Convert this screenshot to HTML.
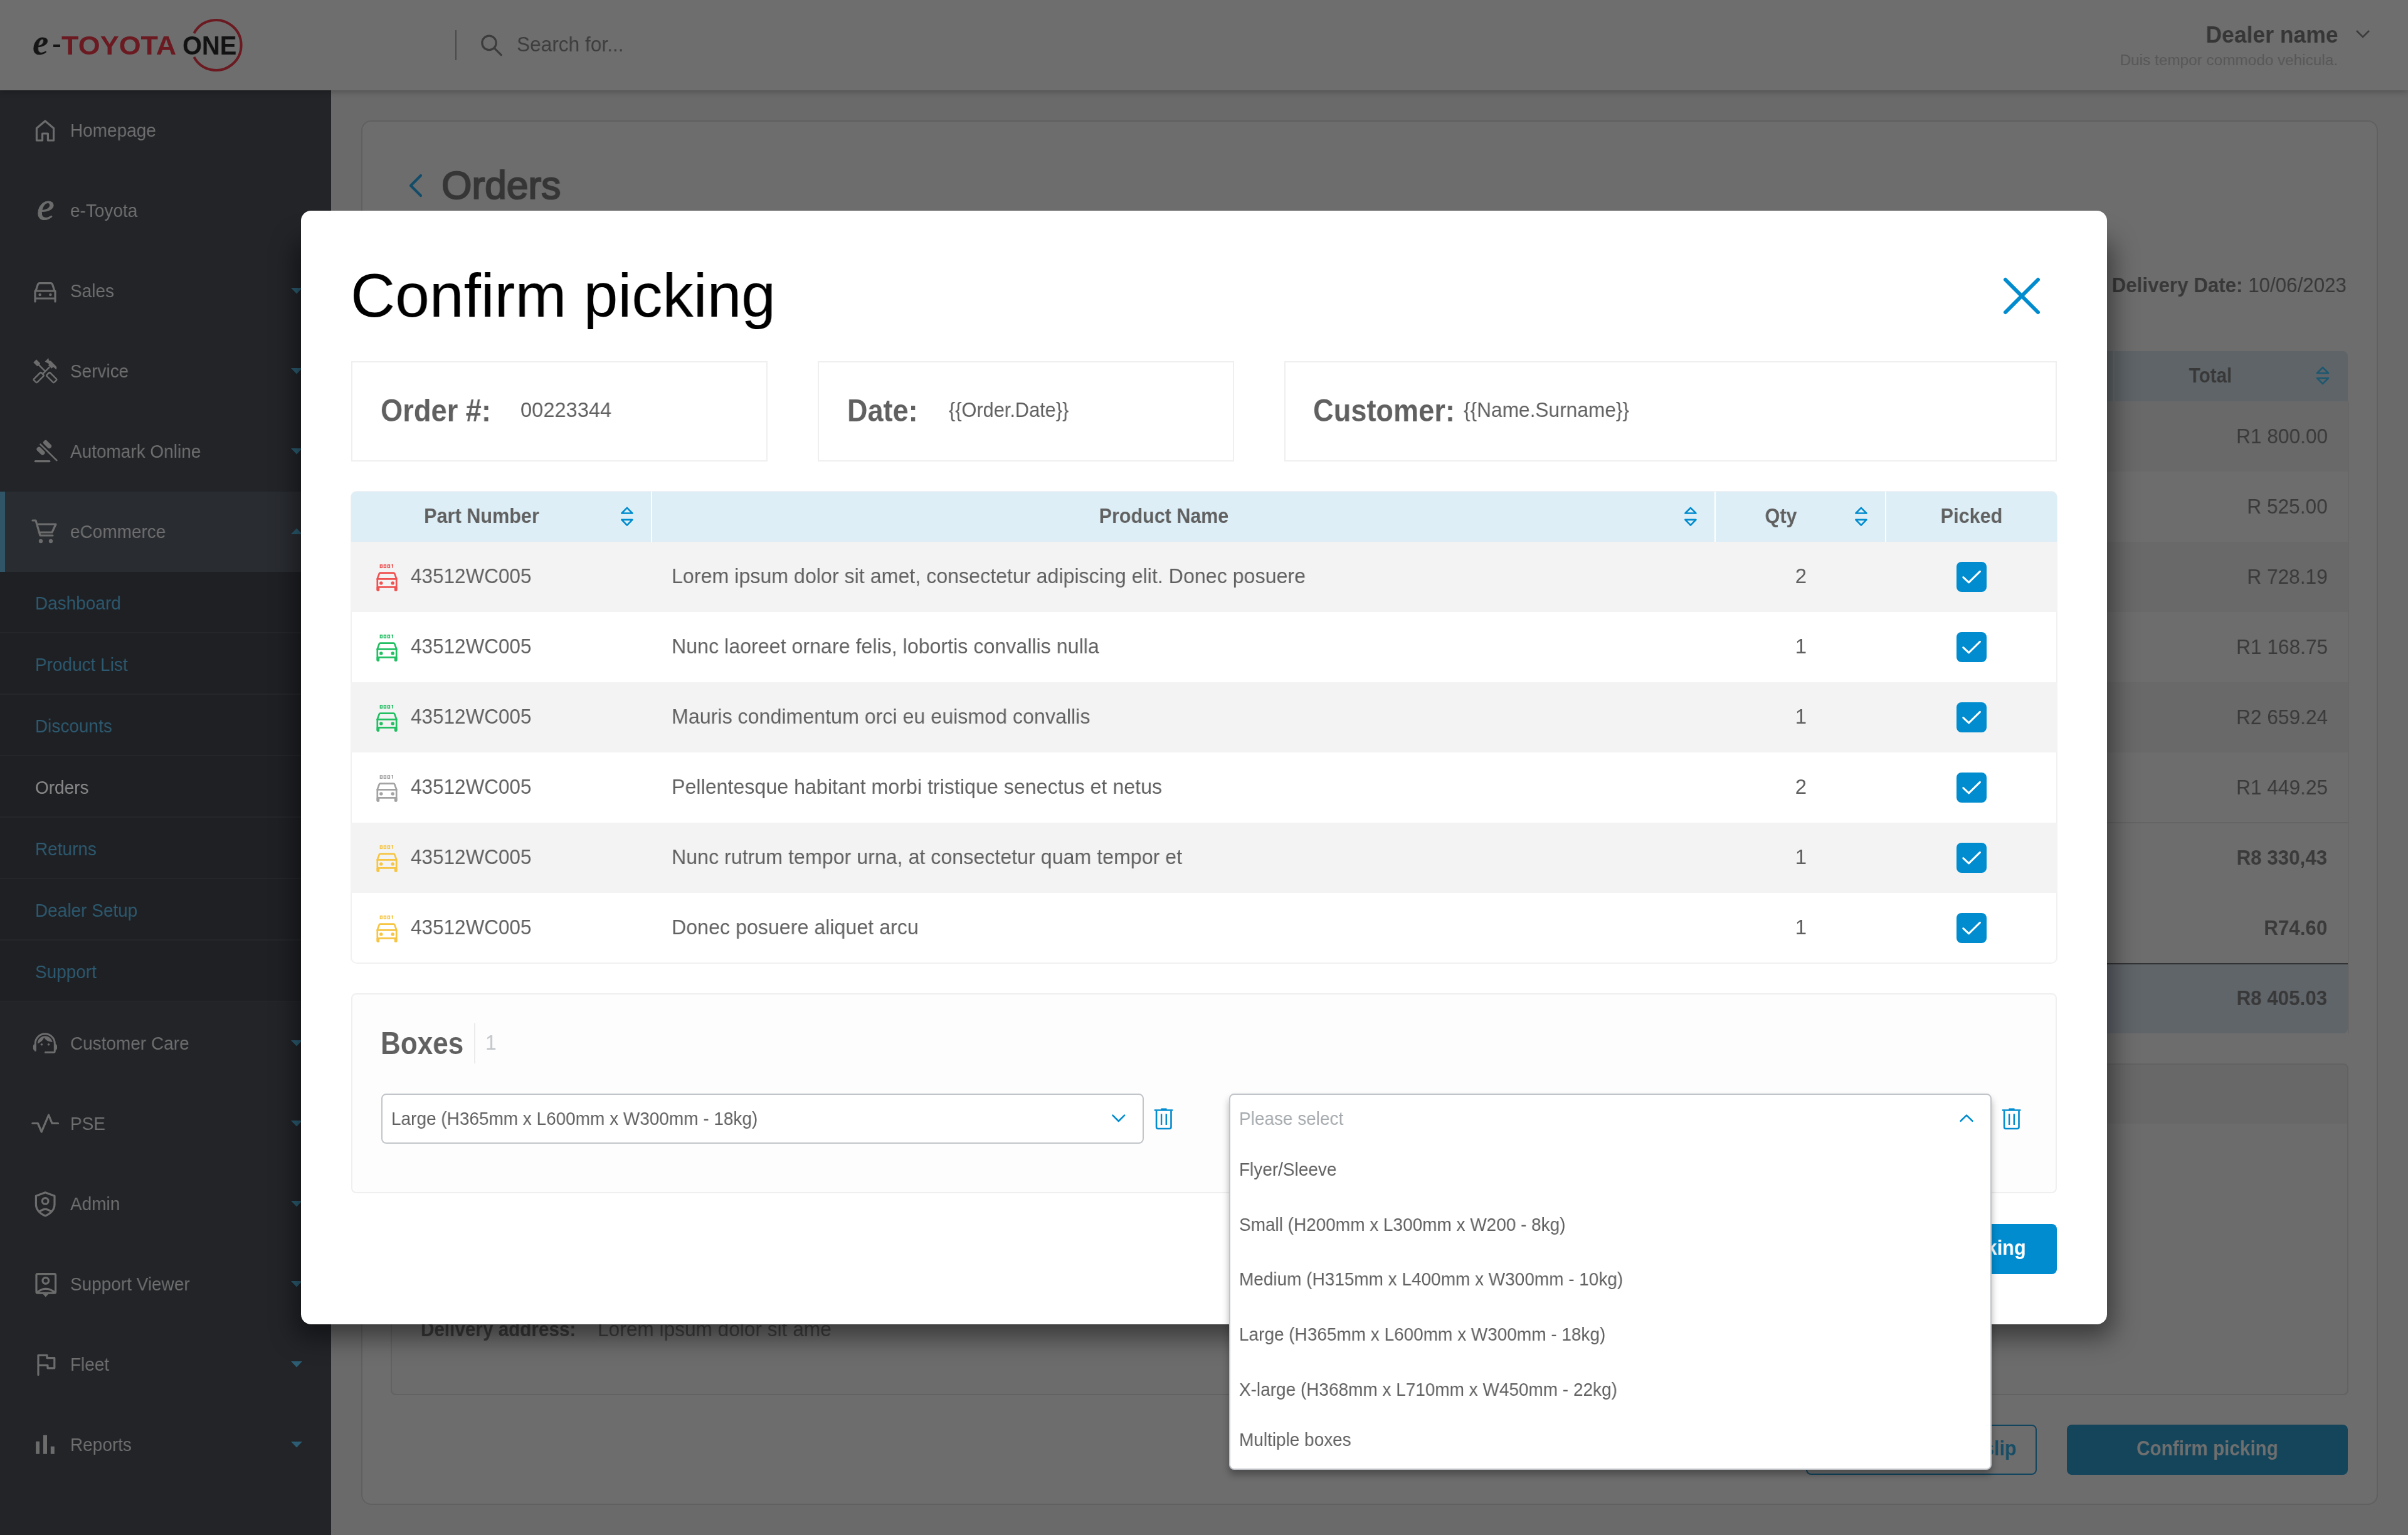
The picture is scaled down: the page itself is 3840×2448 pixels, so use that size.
<!DOCTYPE html>
<html><head><meta charset="utf-8">
<style>
html,body{margin:0;padding:0;}
html{zoom:2;}
@media (max-width:2600px){html{zoom:1;}}
body{width:1920px;height:1224px;overflow:hidden;position:relative;background:#6a6a6a;font-family:"Liberation Sans",sans-serif;}
.a{position:absolute;}
.t{position:absolute;white-space:nowrap;line-height:1;will-change:transform;}
svg{overflow:visible;}
</style></head><body>
<div class="a" style="left:288px;top:96px;width:1608px;height:1104px;background:#6d6d6d;border:1px solid #606060;border-radius:8px;box-sizing:border-box;"></div>
<svg class="a" style="left:319px;top:136px;" width="24" height="24" viewBox="0 0 24 24"><path d="M16.5,4 L8.5,12 L16.5,20" fill="none" stroke="#124c68" stroke-width="2.1" stroke-linecap="round" stroke-linejoin="round"/></svg>
<div class="t" style="top:132.01px;font-size:31.93px;color:#363636;font-weight:400;left:352.22px;transform-origin:0 0;transform:scaleX(0.975);-webkit-text-stroke:1.1px #363636;">Orders</div>
<div class="t" style="right:49px;top:219.29px;font-size:16.48px;color:#383838;transform-origin:100% 0;transform:scaleX(0.95)"><b>Delivery Date:</b> 10/06/2023</div>
<div class="a" style="left:1500px;top:280px;width:372px;height:40px;background:#5e6468;border-radius:0 4px 0 0;"></div>
<div class="a" style="left:1685px;top:280px;width:1px;height:40px;background:#666b6e;"></div>
<div class="t" style="top:291.34px;font-size:16.48px;color:#383838;font-weight:700;left:1762.50px;transform-origin:0 0;transform:scaleX(0.9) translateX(-50%);">Total</div>
<svg class="a" style="left:1846px;top:291px;" width="12" height="17" viewBox="0 0 12 17"><path d="M1.5,6.5 L6,2 L10.5,6.5 Z M1.5,10.5 L6,15 L10.5,10.5 Z" fill="none" stroke="#1d5870" stroke-width="1.3" stroke-linejoin="round"/></svg>
<div class="a" style="left:1500px;top:320px;width:372px;height:56px;background:#696969;"></div>
<div class="t" style="top:339.84px;font-size:16.48px;color:#3a3a3a;font-weight:400;right:64.21px;transform-origin:100% 0;transform:scaleX(0.96);">R1 800.00</div>
<div class="t" style="top:395.84px;font-size:16.48px;color:#3a3a3a;font-weight:400;right:64.21px;transform-origin:100% 0;transform:scaleX(0.96);">R 525.00</div>
<div class="a" style="left:1500px;top:432px;width:372px;height:56px;background:#696969;"></div>
<div class="t" style="top:451.84px;font-size:16.48px;color:#3a3a3a;font-weight:400;right:64.21px;transform-origin:100% 0;transform:scaleX(0.96);">R 728.19</div>
<div class="t" style="top:507.84px;font-size:16.48px;color:#3a3a3a;font-weight:400;right:64.21px;transform-origin:100% 0;transform:scaleX(0.96);">R1 168.75</div>
<div class="a" style="left:1500px;top:544px;width:372px;height:56px;background:#696969;"></div>
<div class="t" style="top:563.84px;font-size:16.48px;color:#3a3a3a;font-weight:400;right:64.21px;transform-origin:100% 0;transform:scaleX(0.96);">R2 659.24</div>
<div class="t" style="top:619.84px;font-size:16.48px;color:#3a3a3a;font-weight:400;right:64.21px;transform-origin:100% 0;transform:scaleX(0.96);">R1 449.25</div>
<div class="t" style="top:675.84px;font-size:16.48px;color:#3a3a3a;font-weight:700;right:64.22px;transform-origin:100% 0;transform:scaleX(0.95);">R8 330,43</div>
<div class="t" style="top:731.84px;font-size:16.48px;color:#3a3a3a;font-weight:700;right:64.22px;transform-origin:100% 0;transform:scaleX(0.95);">R74.60</div>
<div class="a" style="left:1500px;top:655.5px;width:373px;height:1.0px;background:#646464;"></div>
<div class="a" style="left:1500px;top:768px;width:372px;height:56px;background:#60656a;border-top:1px solid #333;box-sizing:border-box;border-radius:0 0 4px 4px;"></div>
<div class="t" style="top:787.84px;font-size:16.48px;color:#383838;font-weight:700;right:64.22px;transform-origin:100% 0;transform:scaleX(0.95);">R8 405.03</div>
<div class="a" style="left:1872px;top:320px;width:1px;height:504px;background:#676767;"></div>
<div class="a" style="left:311.5px;top:848px;width:1561.0px;height:264.5px;border:1px solid #626262;border-radius:4px;box-sizing:border-box;background:#6c6c6c;"></div>
<div class="a" style="left:312.5px;top:849px;width:1559.0px;height:47px;background:#686868;border-radius:4px 4px 0 0;"></div>
<div class="t" style="top:1051.84px;font-size:16.48px;color:#383838;font-weight:700;left:335.36px;transform-origin:0 0;transform:scaleX(0.9);">Delivery address:</div>
<div class="t" style="top:1051.84px;font-size:16.48px;color:#3d3d3d;font-weight:400;left:476.69px;transform-origin:0 0;transform:scaleX(0.96);">Lorem ipsum dolor sit ame</div>
<div class="a" style="left:1440px;top:1136px;width:184px;height:40px;border:1px solid #11455e;border-radius:4px;box-sizing:border-box;"></div>
<div class="t" style="top:1146.84px;font-size:16.48px;color:#174d66;font-weight:700;right:312.03px;transform-origin:100% 0;transform:scaleX(0.93);">Print packing slip</div>
<div class="a" style="left:1648px;top:1136px;width:224px;height:40px;background:#14455b;border-radius:4px;"></div>
<div class="t" style="top:1146.84px;font-size:16.48px;color:#6f6f6f;font-weight:700;left:1760.00px;transform-origin:0 0;transform:scaleX(0.9) translateX(-50%);">Confirm picking</div>
<div class="a" style="left:0;top:0;width:1920px;height:72px;background:#6e6e6e;box-shadow:0 1px 5px rgba(0,0,0,.25);z-index:3;">
</div>
<div class="t" style="top:19.16px;font-size:29.87px;color:#151515;font-weight:700;font-family:'Liberation Serif';left:25.91px;transform-origin:0 0;transform:scaleX(0.95);z-index:4;font-style:italic;">e</div>
<div class="a" style="left:42.5px;top:35.5px;width:5.5px;height:2.0px;background:#151515;z-index:4;"></div>
<div class="t" style="top:25.64px;font-size:21.42px;color:#6a1a20;font-weight:700;left:49.13px;transform-origin:0 0;transform:scaleX(1.05);z-index:4;">TOYOTA</div>
<div class="t" style="top:25.64px;font-size:21.42px;color:#121212;font-weight:700;left:145.51px;transform-origin:0 0;transform:scaleX(0.93);z-index:4;">ONE</div>
<svg class="a" style="left:150.5px;top:15px;z-index:4;" width="42" height="42" viewBox="0 0 42 42"><path d="M4.2,11.5 A20,20 0 1 1 4.2,30.5" fill="none" stroke="#6a1a20" stroke-width="2"/></svg>
<div class="a" style="left:363px;top:24px;width:1px;height:24px;background:#4a4a4a;z-index:4;"></div>
<svg class="a" style="left:380px;top:24px;z-index:4;" width="24" height="24" viewBox="0 0 24 24"><circle cx="10" cy="10.2" r="5.6" fill="none" stroke="#3c3c3c" stroke-width="1.6"/><path d="M14.2,14.4 L19.6,19.8" stroke="#3c3c3c" stroke-width="1.6" stroke-linecap="round"/></svg>
<div class="t" style="top:27.34px;font-size:16.48px;color:#3d3d3d;font-weight:400;left:411.79px;transform-origin:0 0;transform:scaleX(0.96);z-index:4;">Search for...</div>
<div class="t" style="top:18.59px;font-size:18.54px;color:#363636;font-weight:700;right:55.61px;transform-origin:100% 0;transform:scaleX(0.957);z-index:4;">Dealer name</div>
<svg class="a" style="left:1878px;top:23px;z-index:4;" width="12" height="8" viewBox="0 0 12 8"><path d="M1,1.5 L6,6.5 L11,1.5" fill="none" stroke="#3b3b3b" stroke-width="1.3"/></svg>
<div class="t" style="top:41.84px;font-size:12.36px;color:#575757;font-weight:400;right:55.89px;transform-origin:100% 0;transform:scaleX(0.984);z-index:4;">Duis tempor commodo vehicula.</div>
<div class="a" style="left:0;top:72px;width:264px;height:1152px;background:#222428;z-index:2;"></div>
<div class="t" style="top:97.09px;font-size:14.42px;color:#6f6f6f;font-weight:400;left:55.92px;transform-origin:0 0;transform:scaleX(0.97);z-index:2;">Homepage</div>
<div class="t" style="top:161.09px;font-size:14.42px;color:#6f6f6f;font-weight:400;left:55.92px;transform-origin:0 0;transform:scaleX(0.97);z-index:2;">e-Toyota</div>
<div class="t" style="top:225.09px;font-size:14.42px;color:#6f6f6f;font-weight:400;left:55.92px;transform-origin:0 0;transform:scaleX(0.97);z-index:2;">Sales</div>
<svg class="a" style="left:232px;top:229.5px;z-index:2;" width="9" height="5" viewBox="0 0 9 5"><path d="M0,0 L4.5,4.7 L9,0 Z" fill="#2c5d73"/></svg>
<div class="t" style="top:289.09px;font-size:14.42px;color:#6f6f6f;font-weight:400;left:55.92px;transform-origin:0 0;transform:scaleX(0.97);z-index:2;">Service</div>
<svg class="a" style="left:232px;top:293.5px;z-index:2;" width="9" height="5" viewBox="0 0 9 5"><path d="M0,0 L4.5,4.7 L9,0 Z" fill="#2c5d73"/></svg>
<div class="t" style="top:353.09px;font-size:14.42px;color:#6f6f6f;font-weight:400;left:55.92px;transform-origin:0 0;transform:scaleX(0.97);z-index:2;">Automark Online</div>
<svg class="a" style="left:232px;top:357.5px;z-index:2;" width="9" height="5" viewBox="0 0 9 5"><path d="M0,0 L4.5,4.7 L9,0 Z" fill="#2c5d73"/></svg>
<div class="a" style="left:0px;top:392px;width:264px;height:64px;background:#292c31;z-index:2;"></div>
<div class="a" style="left:0px;top:392px;width:4px;height:64px;background:#2f5567;z-index:2;"></div>
<div class="t" style="top:417.09px;font-size:14.42px;color:#6f6f6f;font-weight:400;left:55.92px;transform-origin:0 0;transform:scaleX(0.97);z-index:2;">eCommerce</div>
<svg class="a" style="left:232px;top:421px;z-index:2;" width="9" height="5" viewBox="0 0 9 5"><path d="M0,5 L4.5,0.3 L9,5 Z" fill="#2c5d73"/></svg>
<div class="a" style="left:0px;top:456px;width:264px;height:49px;background:#1f2024;border-bottom:1px solid #242629;box-sizing:border-box;z-index:2;"></div>
<div class="t" style="top:474.09px;font-size:14.42px;color:#2d5a70;font-weight:400;left:27.92px;transform-origin:0 0;transform:scaleX(0.97);z-index:2;">Dashboard</div>
<div class="a" style="left:0px;top:505px;width:264px;height:49px;background:#1f2024;border-bottom:1px solid #242629;box-sizing:border-box;z-index:2;"></div>
<div class="t" style="top:523.09px;font-size:14.42px;color:#2d5a70;font-weight:400;left:27.92px;transform-origin:0 0;transform:scaleX(0.97);z-index:2;">Product List</div>
<div class="a" style="left:0px;top:554px;width:264px;height:49px;background:#1f2024;border-bottom:1px solid #242629;box-sizing:border-box;z-index:2;"></div>
<div class="t" style="top:572.09px;font-size:14.42px;color:#2d5a70;font-weight:400;left:27.92px;transform-origin:0 0;transform:scaleX(0.97);z-index:2;">Discounts</div>
<div class="a" style="left:0px;top:603px;width:264px;height:49px;background:#1f2024;border-bottom:1px solid #242629;box-sizing:border-box;z-index:2;"></div>
<div class="t" style="top:621.09px;font-size:14.42px;color:#8a8a8a;font-weight:400;left:27.92px;transform-origin:0 0;transform:scaleX(0.97);z-index:2;">Orders</div>
<div class="a" style="left:0px;top:652px;width:264px;height:49px;background:#1f2024;border-bottom:1px solid #242629;box-sizing:border-box;z-index:2;"></div>
<div class="t" style="top:670.09px;font-size:14.42px;color:#2d5a70;font-weight:400;left:27.92px;transform-origin:0 0;transform:scaleX(0.97);z-index:2;">Returns</div>
<div class="a" style="left:0px;top:701px;width:264px;height:49px;background:#1f2024;border-bottom:1px solid #242629;box-sizing:border-box;z-index:2;"></div>
<div class="t" style="top:719.09px;font-size:14.42px;color:#2d5a70;font-weight:400;left:27.92px;transform-origin:0 0;transform:scaleX(0.97);z-index:2;">Dealer Setup</div>
<div class="a" style="left:0px;top:750px;width:264px;height:49px;background:#1f2024;border-bottom:1px solid #242629;box-sizing:border-box;z-index:2;"></div>
<div class="t" style="top:768.09px;font-size:14.42px;color:#2d5a70;font-weight:400;left:27.92px;transform-origin:0 0;transform:scaleX(0.97);z-index:2;">Support</div>
<div class="t" style="top:825.09px;font-size:14.42px;color:#6f6f6f;font-weight:400;left:55.92px;transform-origin:0 0;transform:scaleX(0.97);z-index:2;">Customer Care</div>
<svg class="a" style="left:232px;top:829.5px;z-index:2;" width="9" height="5" viewBox="0 0 9 5"><path d="M0,0 L4.5,4.7 L9,0 Z" fill="#2c5d73"/></svg>
<div class="t" style="top:889.09px;font-size:14.42px;color:#6f6f6f;font-weight:400;left:55.92px;transform-origin:0 0;transform:scaleX(0.97);z-index:2;">PSE</div>
<svg class="a" style="left:232px;top:893.5px;z-index:2;" width="9" height="5" viewBox="0 0 9 5"><path d="M0,0 L4.5,4.7 L9,0 Z" fill="#2c5d73"/></svg>
<div class="t" style="top:953.09px;font-size:14.42px;color:#6f6f6f;font-weight:400;left:55.92px;transform-origin:0 0;transform:scaleX(0.97);z-index:2;">Admin</div>
<svg class="a" style="left:232px;top:957.5px;z-index:2;" width="9" height="5" viewBox="0 0 9 5"><path d="M0,0 L4.5,4.7 L9,0 Z" fill="#2c5d73"/></svg>
<div class="t" style="top:1017.09px;font-size:14.42px;color:#6f6f6f;font-weight:400;left:55.92px;transform-origin:0 0;transform:scaleX(0.97);z-index:2;">Support Viewer</div>
<svg class="a" style="left:232px;top:1021.5px;z-index:2;" width="9" height="5" viewBox="0 0 9 5"><path d="M0,0 L4.5,4.7 L9,0 Z" fill="#2c5d73"/></svg>
<div class="t" style="top:1081.09px;font-size:14.42px;color:#6f6f6f;font-weight:400;left:55.92px;transform-origin:0 0;transform:scaleX(0.97);z-index:2;">Fleet</div>
<svg class="a" style="left:232px;top:1085.5px;z-index:2;" width="9" height="5" viewBox="0 0 9 5"><path d="M0,0 L4.5,4.7 L9,0 Z" fill="#2c5d73"/></svg>
<div class="t" style="top:1145.09px;font-size:14.42px;color:#6f6f6f;font-weight:400;left:55.92px;transform-origin:0 0;transform:scaleX(0.97);z-index:2;">Reports</div>
<svg class="a" style="left:232px;top:1149.5px;z-index:2;" width="9" height="5" viewBox="0 0 9 5"><path d="M0,0 L4.5,4.7 L9,0 Z" fill="#2c5d73"/></svg>
<svg class="a" style="left:24px;top:92px;z-index:2;" width="24" height="24" viewBox="0 0 24 24"><path d="M5.2,20 V10.2 L12,4.5 L18.8,10.2 V20 H14.2 V14.5 H9.8 V20 Z" fill="none" stroke="#6c6c6c" stroke-width="1.6" stroke-linecap="round" stroke-linejoin="round"/></svg>
<div class="t" style="top:149.59px;font-size:30.90px;color:#6c6c6c;font-weight:400;font-family:'Liberation Serif';left:29.44px;transform-origin:0 0;z-index:2;font-style:italic;-webkit-text-stroke:0.6px #6c6c6c;">e</div>
<svg class="a" style="left:24px;top:220px;z-index:2;" width="24" height="24" viewBox="0 0 24 24"><path d="M4.5,12 L6.2,6.8 Q6.6,5.8 7.6,5.8 H16.4 Q17.4,5.8 17.8,6.8 L19.5,12 M4,20.5 V12 H20 V20.5 M4,18 H20" fill="none" stroke="#6c6c6c" stroke-width="1.6" stroke-linecap="round" stroke-linejoin="round"/><circle cx="7.8" cy="15" r="1.1" fill="#6c6c6c"/><circle cx="16.2" cy="15" r="1.1" fill="#6c6c6c"/></svg>
<svg class="a" style="left:24px;top:284px;z-index:2;" width="24" height="24" viewBox="0 0 24 24"><path d="M2.6,5.0 L5.0,2.6 L8.0,5.6 L7.5,7.2 L5.6,8.0 Z" fill="#6c6c6c"/><path d="M7,7 L12.3,12.3" stroke="#6c6c6c" stroke-width="1.25"/><rect x="-4.2" y="-1.9" width="8.4" height="3.8" rx="0.9" transform="translate(17.15,17.05) rotate(45)" fill="none" stroke="#6c6c6c" stroke-width="1.25"/><path d="M15.6,8.6 L10.2,14.0" stroke="#6c6c6c" stroke-width="1.25"/><rect x="-4.2" y="-1.9" width="8.4" height="3.8" rx="0.9" transform="translate(6.85,17.05) rotate(-45)" fill="none" stroke="#6c6c6c" stroke-width="1.25"/><path d="M11.8,4.4 L14.6,1.5 L15.0,3.5 L16.5,3.8 L20.7,8.0 Q21.6,9.1 20.8,10.6 L18.4,8.6 L17.2,9.9 L14.5,7.3 L15.2,6.2 Z" fill="#6c6c6c"/></svg>
<svg class="a" style="left:24px;top:348px;z-index:2;" width="24" height="24" viewBox="0 0 24 24"><rect x="-3.8" y="-1.8" width="7.6" height="3.6" rx="1.6" transform="translate(13.8,6.3) rotate(45)" fill="#6c6c6c"/><rect x="-3.8" y="-1.8" width="7.6" height="3.6" rx="1.6" transform="translate(8.5,11.6) rotate(45)" fill="#6c6c6c"/><path d="M8.2,6.3 L21.2,19.1" stroke="#6c6c6c" stroke-width="1.3" stroke-linecap="round"/><path d="M4.2,19.8 H15.4" stroke="#6c6c6c" stroke-width="1.7" stroke-linecap="round"/></svg>
<svg class="a" style="left:24px;top:412px;z-index:2;" width="24" height="24" viewBox="0 0 24 24"><path d="M2,3 H4.5 L8,15 H18 M6.5,6 H20.5 L17.5,12.5 H8" fill="none" stroke="#6c6c6c" stroke-width="1.6" stroke-linecap="round" stroke-linejoin="round"/><circle cx="8.5" cy="19.5" r="1.6" fill="#6c6c6c"/><circle cx="16.5" cy="19.5" r="1.6" fill="#6c6c6c"/></svg>
<svg class="a" style="left:24px;top:820px;z-index:2;" width="24" height="24" viewBox="0 0 24 24"><path d="M4.15,17.6 V12.1 A7.75,7.75 0 0 1 19.65,12.1 V18.2 Q19.65,19.1 18.75,19.1 H12.2" fill="none" stroke="#6c6c6c" stroke-width="1.5" stroke-linecap="round"/><path d="M4.9,12.6 H3.9 Q2.45,12.6 2.45,14.3 V15.9 Q2.45,17.6 3.9,17.6 H4.9 Z M19.1,12.6 H20.1 Q21.5,12.6 21.5,14.3 V15.6 Q21.5,17.3 20.1,17.3 H19.1 Z" fill="#6c6c6c"/><clipPath id="hairc"><circle cx="11.9" cy="12.1" r="5.96"/></clipPath><path clip-path="url(#hairc)" d="M4,13.2 L6.0,12.2 Q10,10.6 11.1,7.3 Q12.6,10.5 17.8,11 L20,10.5 V4 H4 Z" fill="#6c6c6c"/><circle cx="9.19" cy="12.88" r="0.9" fill="#6c6c6c"/><circle cx="14.76" cy="12.88" r="0.9" fill="#6c6c6c"/></svg>
<svg class="a" style="left:24px;top:884px;z-index:2;" width="24" height="24" viewBox="0 0 24 24"><path d="M1.9,11.75 H6.2 L9.1,18.5 L14.8,5.1 L17.5,11.75 H22.3" fill="none" stroke="#6c6c6c" stroke-width="1.6" stroke-linecap="round" stroke-linejoin="round"/></svg>
<svg class="a" style="left:24px;top:948px;z-index:2;" width="24" height="24" viewBox="0 0 24 24"><path d="M12.1,2.9 L19.5,5.6 V12.2 Q19.5,18.2 12.1,21.5 Q4.7,18.2 4.7,12.2 V5.6 Z M7.8,17.9 Q12.1,14.4 16.4,17.9" fill="none" stroke="#6c6c6c" stroke-width="1.6" stroke-linecap="round" stroke-linejoin="round"/><circle cx="12.1" cy="9.7" r="2.4" fill="none" stroke="#6c6c6c" stroke-width="1.6" stroke-linecap="round" stroke-linejoin="round"/></svg>
<svg class="a" style="left:24px;top:1012px;z-index:2;" width="24" height="24" viewBox="0 0 24 24"><rect x="5" y="3.8" width="15.3" height="15.3" rx="1" fill="none" stroke="#6c6c6c" stroke-width="1.6" stroke-linecap="round" stroke-linejoin="round"/><path d="M5.8,18.4 Q12.4,13 19.5,18.4" fill="none" stroke="#6c6c6c" stroke-width="1.6" stroke-linecap="round" stroke-linejoin="round"/><circle cx="12.4" cy="9.2" r="2.4" fill="none" stroke="#6c6c6c" stroke-width="1.6" stroke-linecap="round" stroke-linejoin="round"/><path d="M10,19.6 H14.8 L12.4,22.2 Z" fill="#6c6c6c"/></svg>
<svg class="a" style="left:24px;top:1076px;z-index:2;" width="24" height="24" viewBox="0 0 24 24"><path d="M6.5,20.3 V4.7 H13.5 V6.8 H19.4 V14.9 H14 V12.7 H6.5" fill="none" stroke="#6c6c6c" stroke-width="1.6" stroke-linecap="round" stroke-linejoin="round"/></svg>
<svg class="a" style="left:24px;top:1140px;z-index:2;" width="24" height="24" viewBox="0 0 24 24"><path d="M4.6,9.4 H7.5 V19.4 H4.6 Z M10.5,4.4 H13.5 V19.4 H10.5 Z M16.4,13.4 H19.4 V19.4 H16.4 Z" fill="#6c6c6c"/></svg>
<div class="a" style="left:236px;top:192px;width:1448px;height:874px;background:rgba(0,0,0,.48);border-radius:8px;filter:blur(10px);z-index:9;"></div>
<div class="a" style="left:240px;top:168px;width:1440px;height:888px;background:#fff;border-radius:8px;z-index:10;"></div>
<div class="t" style="top:211.18px;font-size:49.44px;color:#000;font-weight:400;left:279.26px;transform-origin:0 0;transform:scaleX(0.995);z-index:10;">Confirm picking</div>
<svg class="a" style="left:1596px;top:220px;z-index:10;" width="32" height="32" viewBox="0 0 32 32"><path d="M3,3 L29,29 M29,3 L3,29" stroke="#008ccf" stroke-width="3" stroke-linecap="round"/></svg>
<div class="a" style="left:280px;top:288px;width:332px;height:80px;border:1px solid #efefef;box-sizing:border-box;z-index:10;"></div>
<div class="a" style="left:652px;top:288px;width:332px;height:80px;border:1px solid #efefef;box-sizing:border-box;z-index:10;"></div>
<div class="a" style="left:1024px;top:288px;width:616px;height:80px;border:1px solid #efefef;box-sizing:border-box;z-index:10;"></div>
<div class="t" style="top:315.24px;font-size:24.72px;color:#606060;font-weight:700;left:303.32px;transform-origin:0 0;transform:scaleX(0.915);z-index:10;">Order #:</div>
<div class="t" style="top:319.19px;font-size:16.48px;color:#606060;font-weight:400;left:414.96px;transform-origin:0 0;transform:scaleX(0.99);z-index:10;">00223344</div>
<div class="t" style="top:315.24px;font-size:24.72px;color:#606060;font-weight:700;left:675.63px;transform-origin:0 0;transform:scaleX(0.91);z-index:10;">Date:</div>
<div class="t" style="top:319.19px;font-size:16.48px;color:#606060;font-weight:400;left:756.62px;transform-origin:0 0;transform:scaleX(0.932);z-index:10;">{{Order.Date}}</div>
<div class="t" style="top:315.24px;font-size:24.72px;color:#606060;font-weight:700;left:1047.12px;transform-origin:0 0;transform:scaleX(0.914);z-index:10;">Customer:</div>
<div class="t" style="top:319.19px;font-size:16.48px;color:#606060;font-weight:400;left:1166.99px;transform-origin:0 0;transform:scaleX(0.961);z-index:10;">{{Name.Surname}}</div>
<div class="a" style="left:279.5px;top:391.5px;width:1361.0px;height:377.0px;border:1px solid #f1f1f1;border-radius:5px;box-sizing:border-box;z-index:10;"></div>
<div class="a" style="left:280px;top:392px;width:1360px;height:40px;background:#ddeef6;border-radius:4px 4px 0 0;z-index:10;"></div>
<div class="a" style="left:519px;top:392px;width:1px;height:40px;background:#fff;z-index:10;"></div>
<div class="a" style="left:1367px;top:392px;width:1px;height:40px;background:#fff;z-index:10;"></div>
<div class="a" style="left:1503px;top:392px;width:1px;height:40px;background:#fff;z-index:10;"></div>
<div class="t" style="top:403.44px;font-size:16.48px;color:#606060;font-weight:700;left:384.00px;transform-origin:0 0;transform:scaleX(0.929) translateX(-50%);z-index:10;">Part Number</div>
<svg class="a" style="left:494px;top:403px;z-index:10;" width="12" height="17" viewBox="0 0 12 17"><path d="M1.7,6.25 L5.95,1.9 L10.2,6.25 Z M1.7,11.45 L5.95,15.8 L10.2,11.45 Z" fill="none" stroke="#008ccf" stroke-width="1.3" stroke-linejoin="round"/></svg>
<div class="t" style="top:403.44px;font-size:16.48px;color:#606060;font-weight:700;left:928.00px;transform-origin:0 0;transform:scaleX(0.925) translateX(-50%);z-index:10;">Product Name</div>
<svg class="a" style="left:1342px;top:403px;z-index:10;" width="12" height="17" viewBox="0 0 12 17"><path d="M1.7,6.25 L5.95,1.9 L10.2,6.25 Z M1.7,11.45 L5.95,15.8 L10.2,11.45 Z" fill="none" stroke="#008ccf" stroke-width="1.3" stroke-linejoin="round"/></svg>
<div class="t" style="top:403.44px;font-size:16.48px;color:#606060;font-weight:700;left:1420.00px;transform-origin:0 0;transform:scaleX(0.93) translateX(-50%);z-index:10;">Qty</div>
<svg class="a" style="left:1478px;top:403px;z-index:10;" width="12" height="17" viewBox="0 0 12 17"><path d="M1.7,6.25 L5.95,1.9 L10.2,6.25 Z M1.7,11.45 L5.95,15.8 L10.2,11.45 Z" fill="none" stroke="#008ccf" stroke-width="1.3" stroke-linejoin="round"/></svg>
<div class="t" style="top:403.44px;font-size:16.48px;color:#606060;font-weight:700;left:1572.00px;transform-origin:0 0;transform:scaleX(0.93) translateX(-50%);z-index:10;">Picked</div>
<div class="a" style="left:280px;top:432px;width:1360px;height:56px;background:#f3f3f3;z-index:10;"></div>
<svg class="a" style="left:300px;top:450px;z-index:10;" width="17" height="21.5" viewBox="0 0 34 43"><g fill="none" stroke="#f05151" stroke-width="2.7" stroke-linecap="round" stroke-linejoin="round"><path d="M1.6,23.4 L4.8,14.8 Q5.2,13.65 6.5,13.65 H27.5 Q28.8,13.65 29.2,14.8 L32.4,23.4"/><path d="M1.8,40.8 V23.4 H32.2 V40.8 M1.8,36.4 H32.2"/></g><path d="M0.6,36 H5.2 V41.2 Q5.2,43 2.9,43 Q0.6,43 0.6,41.2 Z M28.8,36 H33.4 V41.2 Q33.4,43 31.1,43 Q28.8,43 28.8,41.2 Z" fill="#f05151"/><circle cx="7.8" cy="29.9" r="2.7" fill="#f05151"/><circle cx="26.2" cy="29.9" r="2.7" fill="#f05151"/><g fill="none" stroke="#f05151" stroke-width="1.5"><rect x="6.4" y="0.9" width="3" height="4.4"/><rect x="12.4" y="0.9" width="3" height="4.4"/><rect x="18.4" y="0.9" width="3" height="4.4"/></g><path d="M24.5,0.9 H26.2 V5.8" fill="none" stroke="#f05151" stroke-width="1.6"/></svg>
<div class="t" style="top:451.59px;font-size:16.48px;color:#606060;font-weight:400;left:327.70px;transform-origin:0 0;transform:scaleX(0.955);z-index:10;">43512WC005</div>
<div class="t" style="top:451.59px;font-size:16.48px;color:#606060;font-weight:400;left:535.47px;transform-origin:0 0;transform:scaleX(0.977);z-index:10;">Lorem ipsum dolor sit amet, consectetur adipiscing elit. Donec posuere</div>
<div class="t" style="top:451.59px;font-size:16.48px;color:#606060;font-weight:400;left:1436.00px;transform-origin:0 0;transform:translateX(-50%);z-index:10;">2</div>
<div class="a" style="left:1560px;top:448px;width:24px;height:24px;background:#008ccf;border-radius:4px;z-index:10;"></div>
<svg class="a" style="left:1560px;top:448px;z-index:10;" width="24" height="24" viewBox="0 0 24 24"><path d="M5.4,12.3 L9.8,16.4 L18.7,7.7" fill="none" stroke="#fff" stroke-width="1.55" stroke-linecap="round" stroke-linejoin="round"/></svg>
<svg class="a" style="left:300px;top:506px;z-index:10;" width="17" height="21.5" viewBox="0 0 34 43"><g fill="none" stroke="#22bf63" stroke-width="2.7" stroke-linecap="round" stroke-linejoin="round"><path d="M1.6,23.4 L4.8,14.8 Q5.2,13.65 6.5,13.65 H27.5 Q28.8,13.65 29.2,14.8 L32.4,23.4"/><path d="M1.8,40.8 V23.4 H32.2 V40.8 M1.8,36.4 H32.2"/></g><path d="M0.6,36 H5.2 V41.2 Q5.2,43 2.9,43 Q0.6,43 0.6,41.2 Z M28.8,36 H33.4 V41.2 Q33.4,43 31.1,43 Q28.8,43 28.8,41.2 Z" fill="#22bf63"/><circle cx="7.8" cy="29.9" r="2.7" fill="#22bf63"/><circle cx="26.2" cy="29.9" r="2.7" fill="#22bf63"/><g fill="none" stroke="#22bf63" stroke-width="1.5"><rect x="6.4" y="0.9" width="3" height="4.4"/><rect x="12.4" y="0.9" width="3" height="4.4"/><rect x="18.4" y="0.9" width="3" height="4.4"/></g><path d="M24.5,0.9 H26.2 V5.8" fill="none" stroke="#22bf63" stroke-width="1.6"/></svg>
<div class="t" style="top:507.59px;font-size:16.48px;color:#606060;font-weight:400;left:327.70px;transform-origin:0 0;transform:scaleX(0.955);z-index:10;">43512WC005</div>
<div class="t" style="top:507.59px;font-size:16.48px;color:#606060;font-weight:400;left:535.47px;transform-origin:0 0;transform:scaleX(0.977);z-index:10;">Nunc laoreet ornare felis, lobortis convallis nulla</div>
<div class="t" style="top:507.59px;font-size:16.48px;color:#606060;font-weight:400;left:1436.00px;transform-origin:0 0;transform:translateX(-50%);z-index:10;">1</div>
<div class="a" style="left:1560px;top:504px;width:24px;height:24px;background:#008ccf;border-radius:4px;z-index:10;"></div>
<svg class="a" style="left:1560px;top:504px;z-index:10;" width="24" height="24" viewBox="0 0 24 24"><path d="M5.4,12.3 L9.8,16.4 L18.7,7.7" fill="none" stroke="#fff" stroke-width="1.55" stroke-linecap="round" stroke-linejoin="round"/></svg>
<div class="a" style="left:280px;top:544px;width:1360px;height:56px;background:#f3f3f3;z-index:10;"></div>
<svg class="a" style="left:300px;top:562px;z-index:10;" width="17" height="21.5" viewBox="0 0 34 43"><g fill="none" stroke="#22bf63" stroke-width="2.7" stroke-linecap="round" stroke-linejoin="round"><path d="M1.6,23.4 L4.8,14.8 Q5.2,13.65 6.5,13.65 H27.5 Q28.8,13.65 29.2,14.8 L32.4,23.4"/><path d="M1.8,40.8 V23.4 H32.2 V40.8 M1.8,36.4 H32.2"/></g><path d="M0.6,36 H5.2 V41.2 Q5.2,43 2.9,43 Q0.6,43 0.6,41.2 Z M28.8,36 H33.4 V41.2 Q33.4,43 31.1,43 Q28.8,43 28.8,41.2 Z" fill="#22bf63"/><circle cx="7.8" cy="29.9" r="2.7" fill="#22bf63"/><circle cx="26.2" cy="29.9" r="2.7" fill="#22bf63"/><g fill="none" stroke="#22bf63" stroke-width="1.5"><rect x="6.4" y="0.9" width="3" height="4.4"/><rect x="12.4" y="0.9" width="3" height="4.4"/><rect x="18.4" y="0.9" width="3" height="4.4"/></g><path d="M24.5,0.9 H26.2 V5.8" fill="none" stroke="#22bf63" stroke-width="1.6"/></svg>
<div class="t" style="top:563.59px;font-size:16.48px;color:#606060;font-weight:400;left:327.70px;transform-origin:0 0;transform:scaleX(0.955);z-index:10;">43512WC005</div>
<div class="t" style="top:563.59px;font-size:16.48px;color:#606060;font-weight:400;left:535.47px;transform-origin:0 0;transform:scaleX(0.977);z-index:10;">Mauris condimentum orci eu euismod convallis</div>
<div class="t" style="top:563.59px;font-size:16.48px;color:#606060;font-weight:400;left:1436.00px;transform-origin:0 0;transform:translateX(-50%);z-index:10;">1</div>
<div class="a" style="left:1560px;top:560px;width:24px;height:24px;background:#008ccf;border-radius:4px;z-index:10;"></div>
<svg class="a" style="left:1560px;top:560px;z-index:10;" width="24" height="24" viewBox="0 0 24 24"><path d="M5.4,12.3 L9.8,16.4 L18.7,7.7" fill="none" stroke="#fff" stroke-width="1.55" stroke-linecap="round" stroke-linejoin="round"/></svg>
<svg class="a" style="left:300px;top:618px;z-index:10;" width="17" height="21.5" viewBox="0 0 34 43"><g fill="none" stroke="#a3a3a3" stroke-width="2.7" stroke-linecap="round" stroke-linejoin="round"><path d="M1.6,23.4 L4.8,14.8 Q5.2,13.65 6.5,13.65 H27.5 Q28.8,13.65 29.2,14.8 L32.4,23.4"/><path d="M1.8,40.8 V23.4 H32.2 V40.8 M1.8,36.4 H32.2"/></g><path d="M0.6,36 H5.2 V41.2 Q5.2,43 2.9,43 Q0.6,43 0.6,41.2 Z M28.8,36 H33.4 V41.2 Q33.4,43 31.1,43 Q28.8,43 28.8,41.2 Z" fill="#a3a3a3"/><circle cx="7.8" cy="29.9" r="2.7" fill="#a3a3a3"/><circle cx="26.2" cy="29.9" r="2.7" fill="#a3a3a3"/><g fill="none" stroke="#a3a3a3" stroke-width="1.5"><rect x="6.4" y="0.9" width="3" height="4.4"/><rect x="12.4" y="0.9" width="3" height="4.4"/><rect x="18.4" y="0.9" width="3" height="4.4"/></g><path d="M24.5,0.9 H26.2 V5.8" fill="none" stroke="#a3a3a3" stroke-width="1.6"/></svg>
<div class="t" style="top:619.59px;font-size:16.48px;color:#606060;font-weight:400;left:327.70px;transform-origin:0 0;transform:scaleX(0.955);z-index:10;">43512WC005</div>
<div class="t" style="top:619.59px;font-size:16.48px;color:#606060;font-weight:400;left:535.47px;transform-origin:0 0;transform:scaleX(0.977);z-index:10;">Pellentesque habitant morbi tristique senectus et netus</div>
<div class="t" style="top:619.59px;font-size:16.48px;color:#606060;font-weight:400;left:1436.00px;transform-origin:0 0;transform:translateX(-50%);z-index:10;">2</div>
<div class="a" style="left:1560px;top:616px;width:24px;height:24px;background:#008ccf;border-radius:4px;z-index:10;"></div>
<svg class="a" style="left:1560px;top:616px;z-index:10;" width="24" height="24" viewBox="0 0 24 24"><path d="M5.4,12.3 L9.8,16.4 L18.7,7.7" fill="none" stroke="#fff" stroke-width="1.55" stroke-linecap="round" stroke-linejoin="round"/></svg>
<div class="a" style="left:280px;top:656px;width:1360px;height:56px;background:#f3f3f3;z-index:10;"></div>
<svg class="a" style="left:300px;top:674px;z-index:10;" width="17" height="21.5" viewBox="0 0 34 43"><g fill="none" stroke="#f6c544" stroke-width="2.7" stroke-linecap="round" stroke-linejoin="round"><path d="M1.6,23.4 L4.8,14.8 Q5.2,13.65 6.5,13.65 H27.5 Q28.8,13.65 29.2,14.8 L32.4,23.4"/><path d="M1.8,40.8 V23.4 H32.2 V40.8 M1.8,36.4 H32.2"/></g><path d="M0.6,36 H5.2 V41.2 Q5.2,43 2.9,43 Q0.6,43 0.6,41.2 Z M28.8,36 H33.4 V41.2 Q33.4,43 31.1,43 Q28.8,43 28.8,41.2 Z" fill="#f6c544"/><circle cx="7.8" cy="29.9" r="2.7" fill="#f6c544"/><circle cx="26.2" cy="29.9" r="2.7" fill="#f6c544"/><g fill="none" stroke="#f6c544" stroke-width="1.5"><rect x="6.4" y="0.9" width="3" height="4.4"/><rect x="12.4" y="0.9" width="3" height="4.4"/><rect x="18.4" y="0.9" width="3" height="4.4"/></g><path d="M24.5,0.9 H26.2 V5.8" fill="none" stroke="#f6c544" stroke-width="1.6"/></svg>
<div class="t" style="top:675.59px;font-size:16.48px;color:#606060;font-weight:400;left:327.70px;transform-origin:0 0;transform:scaleX(0.955);z-index:10;">43512WC005</div>
<div class="t" style="top:675.59px;font-size:16.48px;color:#606060;font-weight:400;left:535.47px;transform-origin:0 0;transform:scaleX(0.977);z-index:10;">Nunc rutrum tempor urna, at consectetur quam tempor et</div>
<div class="t" style="top:675.59px;font-size:16.48px;color:#606060;font-weight:400;left:1436.00px;transform-origin:0 0;transform:translateX(-50%);z-index:10;">1</div>
<div class="a" style="left:1560px;top:672px;width:24px;height:24px;background:#008ccf;border-radius:4px;z-index:10;"></div>
<svg class="a" style="left:1560px;top:672px;z-index:10;" width="24" height="24" viewBox="0 0 24 24"><path d="M5.4,12.3 L9.8,16.4 L18.7,7.7" fill="none" stroke="#fff" stroke-width="1.55" stroke-linecap="round" stroke-linejoin="round"/></svg>
<svg class="a" style="left:300px;top:730px;z-index:10;" width="17" height="21.5" viewBox="0 0 34 43"><g fill="none" stroke="#f6c544" stroke-width="2.7" stroke-linecap="round" stroke-linejoin="round"><path d="M1.6,23.4 L4.8,14.8 Q5.2,13.65 6.5,13.65 H27.5 Q28.8,13.65 29.2,14.8 L32.4,23.4"/><path d="M1.8,40.8 V23.4 H32.2 V40.8 M1.8,36.4 H32.2"/></g><path d="M0.6,36 H5.2 V41.2 Q5.2,43 2.9,43 Q0.6,43 0.6,41.2 Z M28.8,36 H33.4 V41.2 Q33.4,43 31.1,43 Q28.8,43 28.8,41.2 Z" fill="#f6c544"/><circle cx="7.8" cy="29.9" r="2.7" fill="#f6c544"/><circle cx="26.2" cy="29.9" r="2.7" fill="#f6c544"/><g fill="none" stroke="#f6c544" stroke-width="1.5"><rect x="6.4" y="0.9" width="3" height="4.4"/><rect x="12.4" y="0.9" width="3" height="4.4"/><rect x="18.4" y="0.9" width="3" height="4.4"/></g><path d="M24.5,0.9 H26.2 V5.8" fill="none" stroke="#f6c544" stroke-width="1.6"/></svg>
<div class="t" style="top:731.59px;font-size:16.48px;color:#606060;font-weight:400;left:327.70px;transform-origin:0 0;transform:scaleX(0.955);z-index:10;">43512WC005</div>
<div class="t" style="top:731.59px;font-size:16.48px;color:#606060;font-weight:400;left:535.47px;transform-origin:0 0;transform:scaleX(0.977);z-index:10;">Donec posuere aliquet arcu</div>
<div class="t" style="top:731.59px;font-size:16.48px;color:#606060;font-weight:400;left:1436.00px;transform-origin:0 0;transform:translateX(-50%);z-index:10;">1</div>
<div class="a" style="left:1560px;top:728px;width:24px;height:24px;background:#008ccf;border-radius:4px;z-index:10;"></div>
<svg class="a" style="left:1560px;top:728px;z-index:10;" width="24" height="24" viewBox="0 0 24 24"><path d="M5.4,12.3 L9.8,16.4 L18.7,7.7" fill="none" stroke="#fff" stroke-width="1.55" stroke-linecap="round" stroke-linejoin="round"/></svg>
<div class="a" style="left:280px;top:792px;width:1360px;height:159.5px;border:1px solid #efefef;border-radius:4px;box-sizing:border-box;background:#fdfdfd;z-index:10;"></div>
<div class="t" style="top:819.74px;font-size:24.72px;color:#606060;font-weight:700;left:303.66px;transform-origin:0 0;transform:scaleX(0.89);z-index:10;">Boxes</div>
<div class="a" style="left:378px;top:816px;width:1px;height:32px;background:#ebebeb;z-index:10;"></div>
<div class="t" style="top:823.34px;font-size:16.48px;color:#c1c5c9;font-weight:400;left:387.09px;transform-origin:0 0;transform:scaleX(0.96);z-index:10;">1</div>
<div class="a" style="left:304px;top:872px;width:608px;height:40px;border:1px solid #c1c5c9;border-radius:4px;box-sizing:border-box;background:#fff;z-index:10;"></div>
<div class="t" style="top:885.09px;font-size:14.42px;color:#606060;font-weight:400;left:311.92px;transform-origin:0 0;transform:scaleX(0.97);z-index:10;">Large (H365mm x L600mm x W300mm - 18kg)</div>
<svg class="a" style="left:885px;top:886px;z-index:10;" width="14" height="10" viewBox="0 0 14 10"><path d="M2.2,3.3 L6.9,8 L11.6,3.3" fill="none" stroke="#008ccf" stroke-width="1.3" stroke-linecap="round" stroke-linejoin="round"/></svg>
<svg class="a" style="left:920.2px;top:883.4px;z-index:10;" width="16" height="18" viewBox="0 0 16 18"><path d="M0.4,1.75 H15.2" stroke="#008ccf" stroke-width="1.2"/><rect x="5.6" y="0.3" width="4.8" height="1.3" rx="0.6" fill="#008ccf"/><path d="M2.05,2.3 V15.3 Q2.05,16.5 3.25,16.5 H12.55 Q13.75,16.5 13.75,15.3 V2.3" fill="none" stroke="#008ccf" stroke-width="1.3"/><path d="M6.05,4.8 V13.5 M9.9,4.8 V13.5" stroke="#008ccf" stroke-width="1.2"/></svg>
<div class="a" style="left:1474px;top:976px;width:166px;height:40px;background:#008ccf;border-radius:4px;z-index:10;"></div>
<div class="t" style="top:986.84px;font-size:16.48px;color:#fff;font-weight:700;left:1557.00px;transform-origin:0 0;transform:scaleX(0.93) translateX(-50%);z-index:10;">Confirm picking</div>
<svg class="a" style="left:1596.2px;top:883.3px;z-index:10;" width="16" height="18" viewBox="0 0 16 18"><path d="M0.4,1.75 H15.2" stroke="#008ccf" stroke-width="1.2"/><rect x="5.6" y="0.3" width="4.8" height="1.3" rx="0.6" fill="#008ccf"/><path d="M2.05,2.3 V15.3 Q2.05,16.5 3.25,16.5 H12.55 Q13.75,16.5 13.75,15.3 V2.3" fill="none" stroke="#008ccf" stroke-width="1.3"/><path d="M6.05,4.8 V13.5 M9.9,4.8 V13.5" stroke="#008ccf" stroke-width="1.2"/></svg>
<div class="a" style="left:980px;top:872px;width:608px;height:300px;border:1px solid #c1c5c9;border-radius:4px;box-sizing:border-box;background:#fff;box-shadow:0 4px 6px rgba(0,0,0,.3);z-index:11;"></div>
<div class="t" style="top:885.09px;font-size:14.42px;color:#a5aaae;font-weight:400;left:987.92px;transform-origin:0 0;transform:scaleX(0.97);z-index:11;">Please select</div>
<svg class="a" style="left:1561px;top:886px;z-index:11;" width="14" height="10" viewBox="0 0 14 10"><path d="M2.3,7.9 L7,3.3 L11.7,7.9" fill="none" stroke="#008ccf" stroke-width="1.3" stroke-linecap="round" stroke-linejoin="round"/></svg>
<div class="t" style="top:925.29px;font-size:14.42px;color:#606060;font-weight:400;left:988.02px;transform-origin:0 0;transform:scaleX(0.97);z-index:11;">Flyer/Sleeve</div>
<div class="t" style="top:969.29px;font-size:14.42px;color:#606060;font-weight:400;left:988.02px;transform-origin:0 0;transform:scaleX(0.97);z-index:11;">Small (H200mm x L300mm x W200 - 8kg)</div>
<div class="t" style="top:1013.09px;font-size:14.42px;color:#606060;font-weight:400;left:988.02px;transform-origin:0 0;transform:scaleX(0.97);z-index:11;">Medium (H315mm x L400mm x W300mm - 10kg)</div>
<div class="t" style="top:1057.09px;font-size:14.42px;color:#606060;font-weight:400;left:988.02px;transform-origin:0 0;transform:scaleX(0.97);z-index:11;">Large (H365mm x L600mm x W300mm - 18kg)</div>
<div class="t" style="top:1101.09px;font-size:14.42px;color:#606060;font-weight:400;left:988.02px;transform-origin:0 0;transform:scaleX(0.97);z-index:11;">X-large (H368mm x L710mm x W450mm - 22kg)</div>
<div class="t" style="top:1141.09px;font-size:14.42px;color:#606060;font-weight:400;left:988.02px;transform-origin:0 0;transform:scaleX(0.97);z-index:11;">Multiple boxes</div>
</body></html>
